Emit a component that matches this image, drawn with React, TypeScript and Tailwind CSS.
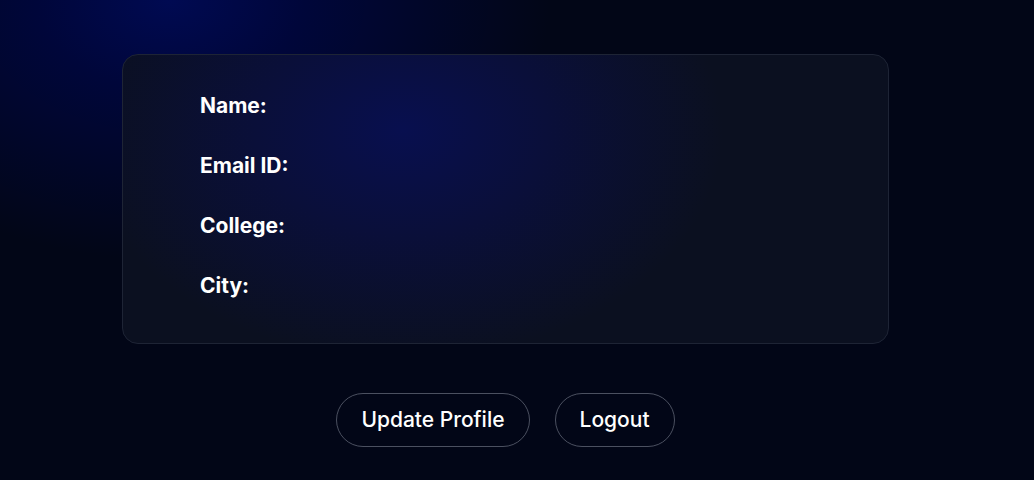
export default function App() {
  const rows = ["Name:", "Email ID:", "College:", "City:"];
  return (
    <div
      className="min-h-[480px] w-full bg-[#020617] bg-[radial-gradient(ellipse_380px_260px_at_170px_0px,#000a52_0%,#00063a_35%,rgba(2,6,23,0)_100%)] pr-[23px] pt-[54px]"
      style={{ fontFamily: "Inter, 'Noto Sans', sans-serif" }}
    >
      <div className="flex flex-col items-center">
        <div className="w-[767px] rounded-[16px] border border-[#1e2435] bg-[#0b1020] bg-[radial-gradient(ellipse_320px_230px_at_280px_75px,#080f4f_0%,#0a0f3a_45%,rgba(11,16,32,0)_100%)] pl-[77px] pt-[37px] pb-[43px]">
          <div className="flex flex-col gap-[32px]">
            {rows.map((r) => (
              <div key={r} className="text-[21px] leading-[28px] font-bold text-white">
                {r}
              </div>
            ))}
          </div>
        </div>
        <div className="mt-[49px] flex gap-[25px]">
          <button className="rounded-full border border-[#4b5060] bg-transparent px-[24px] py-[12px] text-[21px] leading-[28px] font-medium text-white">
            Update Profile
          </button>
          <button className="rounded-full border border-[#4b5060] bg-transparent px-[24px] py-[12px] text-[21px] leading-[28px] font-medium text-white">
            Logout
          </button>
        </div>
      </div>
    </div>
  );
}
